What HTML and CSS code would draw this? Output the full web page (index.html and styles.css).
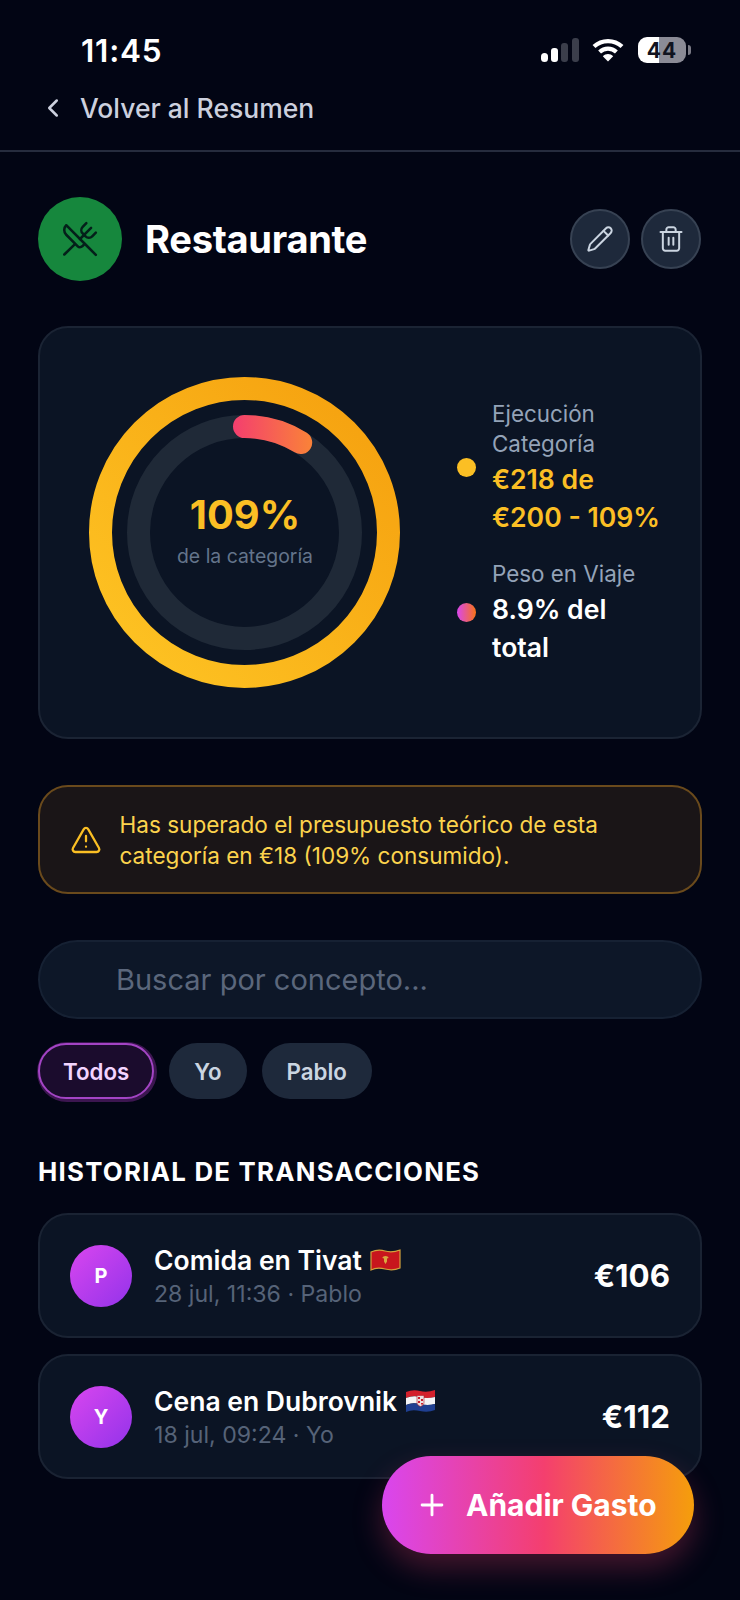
FILE: index.html
```html
<!DOCTYPE html>
<html lang="es">
<head>
<meta charset="utf-8">
<title>Restaurante</title>
<link rel="stylesheet" href="styles.css">
</head>
<body>
<div class="app">
  <header class="status">
    <span class="time">11:45</span>
    <div class="status-icons">
      <svg class="signal" width="38" height="24" viewBox="0 0 38 24"><rect x="0" y="15" width="7" height="9" rx="3.5" fill="#fff"/><rect x="10" y="10" width="7" height="14" rx="3" fill="#fff"/><rect x="20" y="5" width="7" height="19" rx="3" fill="#3b3e4b"/><rect x="31" y="0" width="7" height="24" rx="3" fill="#3b3e4b"/></svg>
      <svg class="wifi" width="32" height="24" viewBox="0 0 32 24"><path d="M2 8.6C9.8 1.2 22.2 1.2 30 8.6" fill="none" stroke="#fff" stroke-width="4.2"/><path d="M7.6 14C12.4 9.6 19.6 9.6 24.4 14" fill="none" stroke="#fff" stroke-width="4.2"/><path d="M10.8 18.2C13.8 15.4 18.2 15.4 21.2 18.2L16 23.6Z" fill="#fff"/></svg>
      <div class="battery"><span class="battery-level">44</span><span class="battery-nub"></span></div>
    </div>
  </header>
  <nav class="nav">
    <svg class="icon chevron" width="30" height="30" viewBox="0 0 24 24"><path d="m15 18-6-6 6-6"/></svg>
    <span>Volver al Resumen</span>
  </nav>
  <main class="main">
    <section class="title-row">
      <div class="cat-icon">
        <svg class="icon utensils" width="38" height="38" viewBox="0 0 24 24"><path d="m16 2-2.3 2.3a3 3 0 0 0 0 4.2l1.8 1.8a3 3 0 0 0 4.2 0L22 8"/><path d="M15 15 3.3 3.3a4.2 4.2 0 0 0 0 6l7.3 7.3c.7.7 2 .7 2.8 0L15 15Zm0 0 7 7"/><path d="m2.1 21.8 6.4-6.3"/><path d="m19 5-7 7"/></svg>
      </div>
      <h1 class="title">Restaurante</h1>
      <button class="round-btn"><svg class="icon action" width="28" height="28" viewBox="0 0 24 24"><path d="M21.174 6.812a1 1 0 0 0-3.986-3.987L3.842 16.174a2 2 0 0 0-.5.83l-1.321 4.352a.5.5 0 0 0 .623.622l4.353-1.32a2 2 0 0 0 .83-.497z"/><path d="m15 5 4 4"/></svg></button>
      <button class="round-btn"><svg class="icon action" width="28" height="28" viewBox="0 0 24 24"><path d="M3 6h18"/><path d="M19 6v14c0 1-1 2-2 2H7c-1 0-2-1-2-2V6"/><path d="M8 6V4c0-1 1-2 2-2h4c1 0 2 1 2 2v2"/><path d="M10 11v6"/><path d="M14 11v6"/></svg></button>
    </section>

    <section class="summary">
      <div class="ring">
        <svg width="311" height="311" viewBox="0 0 311 311">
          <defs>
            <linearGradient id="outerGrad" x1="0" y1="1" x2="1" y2="0"><stop offset="0" stop-color="#fec524"/><stop offset="1" stop-color="#f59f0e"/></linearGradient>
            <linearGradient id="arcGrad" gradientUnits="userSpaceOnUse" x1="145" y1="50" x2="220" y2="50"><stop offset="0" stop-color="#f43f6e"/><stop offset="1" stop-color="#f9803a"/></linearGradient>
          </defs>
          <circle class="ring-outer" cx="155.5" cy="155.5" r="144"/>
          <circle class="ring-track" cx="155.5" cy="155.5" r="106"/>
          <path class="ring-arc" d="M155.5 49.5A106 106 0 0 1 211.7 65.6"/>
        </svg>
        <div class="ring-center">
          <span class="ring-value">109%</span>
          <span class="ring-caption">de la categoría</span>
        </div>
      </div>
      <div class="legend">
        <div class="legend-item">
          <span class="dot dot-amber"></span>
          <div class="legend-text">
            <span class="legend-label">Ejecución Categoría</span>
            <span class="legend-value amber">€218 de €200 - 109%</span>
          </div>
        </div>
        <div class="legend-item">
          <span class="dot dot-pink"></span>
          <div class="legend-text">
            <span class="legend-label">Peso en Viaje</span>
            <span class="legend-value">8.9% del total</span>
          </div>
        </div>
      </div>
    </section>

    <section class="alert">
      <svg class="icon warn" width="32" height="32" viewBox="0 0 24 24"><path d="m21.73 18-8-14a2 2 0 0 0-3.48 0l-8 14A2 2 0 0 0 4 21h16a2 2 0 0 0 1.73-3"/><path d="M12 9v4"/><path d="M12 17h.01"/></svg>
      <p class="alert-text">Has superado el presupuesto teórico de esta categoría en €18 (109% consumido).</p>
    </section>

    <div class="search">Buscar por concepto...</div>

    <div class="chips">
      <span class="chip chip-active">Todos</span>
      <span class="chip">Yo</span>
      <span class="chip">Pablo</span>
    </div>

    <h2 class="heading">HISTORIAL DE TRANSACCIONES</h2>

    <div class="list">
      <article class="tx">
        <span class="avatar">P</span>
        <div class="tx-body">
          <div class="tx-title">Comida en Tivat
            <svg class="flag" width="31" height="24" viewBox="0 0 31 24"><path d="M1 4Q8 1 15 3T30 2V20Q23 23 15 21T1 22Z" fill="#c8161d" stroke="#d3a23c" stroke-width="1.2"/><path d="M15.5 8c-1.600 0-2.800.8-3.200 2l1.700.5v3l1.500 2.500 1.500-2.500v-3l1.700-.5c-.4-1.200-1.600-2-3.200-2Z" fill="#d9a93f"/></svg>
          </div>
          <div class="tx-sub">28 jul, 11:36 · Pablo</div>
        </div>
        <span class="tx-amount">€106</span>
      </article>
      <article class="tx">
        <span class="avatar">Y</span>
        <div class="tx-body">
          <div class="tx-title">Cena en Dubrovnik
            <svg class="flag" width="31" height="24" viewBox="0 0 31 24"><path d="M1 3Q8 0 15 2T30 1V8Q23 10 15 8T1 9Z" fill="#d3202c"/><path d="M1 9Q8 6 15 8T30 8V15Q23 17 15 15T1 16Z" fill="#f4f4f6"/><path d="M1 16Q8 13 15 15T30 15V21Q23 24 15 22T1 23Z" fill="#1f3f91"/><path d="M12 6.500h7v7c0 2-1.500 3.200-3.500 4-2-.8-3.500-2-3.500-4Z" fill="#eadfe0" stroke="#b11c2a" stroke-width=".6"/><path d="M13 8h2v2h-2Zm3 2h2v2h-2Zm-3 2h2v2h-2Zm3 2h2v1.500h-2Z" fill="#c9202e"/></svg>
          </div>
          <div class="tx-sub">18 jul, 09:24 · Yo</div>
        </div>
        <span class="tx-amount">€112</span>
      </article>
    </div>
  </main>

  <button class="fab">
    <svg class="icon plus" width="34" height="34" viewBox="0 0 24 24"><path d="M5 12h14"/><path d="M12 5v14"/></svg>
    <span>Añadir Gasto</span>
  </button>
</div>
</body>
</html>
```

FILE: styles.css
```css
* { box-sizing: border-box; }
html, body { margin: 0; padding: 0; background: #020514; }
body { font-family: Inter, "Noto Sans", "Liberation Sans", sans-serif; color: #fff; }
.app { position: relative; width: 740px; height: 1600px; overflow: hidden; background: #020514; }

.icon { fill: none; stroke: currentColor; stroke-width: 2; stroke-linecap: round; stroke-linejoin: round; flex: none; }

.status { height: 74px; padding: 26px 54px 0 81px; display: flex; align-items: center; justify-content: space-between; }
.time { font-size: 31.5px; font-weight: 600; letter-spacing: .8px; color: #fff; }
.status-icons { display: flex; align-items: center; }
.signal { margin-right: 13px; }
.wifi { margin-right: 14px; }
.battery { position: relative; width: 48px; height: 26px; border-radius: 9px; background: linear-gradient(90deg, #fff 44%, #8b8b96 44%); display: flex; align-items: center; justify-content: center; }
.battery-level { font-size: 21px; font-weight: 700; color: #101320; letter-spacing: 1px; }
.battery-nub { position: absolute; left: 50px; top: 8px; width: 3px; height: 10px; border-radius: 0 3px 3px 0; background: #7b7b86; }

.nav { height: 78px; padding: 0 0 9px 38px; display: flex; align-items: center; gap: 12px; color: #ccd0de; font-size: 26.5px; font-weight: 500; border-bottom: 2px solid #262c3e; }
.chevron { stroke-width: 2; }

.main { padding: 45px 38px 0; }

.title-row { display: flex; align-items: center; gap: 11px; padding-right: 1px; }
.cat-icon { width: 84px; height: 84px; border-radius: 50%; background: #16873d; display: flex; align-items: center; justify-content: center; color: #04201a; margin-right: 12px; flex: none; }
.utensils { stroke-width: 1.6; }
.title { flex: 1; margin: 0; font-size: 38.1px; font-weight: 700; letter-spacing: -.3px; color: #fff; }
.round-btn { width: 60px; height: 60px; padding: 0; border-radius: 50%; border: 2px solid #374253; background: #1e293b; color: #cbd5e1; display: flex; align-items: center; justify-content: center; flex: none; }
.action { stroke-width: 1.7; }

.summary { margin-top: 45px; height: 413px; padding-left: 49px; border: 2px solid #1b2434; border-radius: 30px; background: #0b1424; display: flex; align-items: center; }
.ring { display: grid; place-items: center; width: 311px; height: 311px; flex: none; }
.ring > * { grid-area: 1 / 1; }
.ring-outer { fill: none; stroke: url(#outerGrad); stroke-width: 23; }
.ring-track { fill: none; stroke: #1f2937; stroke-width: 23; }
.ring-arc { fill: none; stroke: url(#arcGrad); stroke-width: 23; stroke-linecap: round; }
.ring-center { display: flex; flex-direction: column; align-items: center; padding: 0 0 4px 1px; }
.ring-value { font-size: 39.8px; font-weight: 700; line-height: 44px; color: #fbbf24; }
.ring-caption { margin-top: 6px; font-size: 19.4px; line-height: 26px; color: #64748b; }

.legend { margin-left: 57px; display: flex; flex-direction: column; gap: 22px; }
.legend-item { display: flex; align-items: center; gap: 16px; }
.dot { width: 19px; height: 19px; border-radius: 50%; flex: none; }
.dot-amber { background: #fbbf24; }
.dot-pink { background: linear-gradient(90deg, #d946ef, #f97316); }
.legend-text { width: 172px; }
.legend-label { display: block; font-size: 22.4px; line-height: 30px; color: #94a3b8; }
.legend-value { display: block; margin-top: 1px; font-size: 26.6px; line-height: 38.5px; font-weight: 600; color: #fff; }
.amber { color: #fbbf24; }

.alert { margin-top: 46px; height: 109px; padding-left: 30px; border: 2px solid #6a4a1c; border-radius: 30px; background: #1a1517; display: flex; align-items: center; gap: 17.5px; }
.warn { color: #fbbf24; stroke-width: 1.7; }
.alert-text { margin: 0; width: 520px; font-size: 22.55px; line-height: 31px; color: #fcd34d; }

.search { margin-top: 46px; height: 79px; padding-left: 76px; border: 2px solid #162133; border-radius: 40px; background: #0d1728; display: flex; align-items: center; font-size: 29px; color: #5b677c; }

.chips { margin-top: 24px; display: flex; gap: 15px; }
.chip { height: 56px; padding: 0 25px; border-radius: 28px; background: #1e293b; color: #cbd5e1; font-size: 22.3px; font-weight: 600; display: flex; align-items: center; }
.chip-active { background: #1b0c2d; color: #f3d4ff; border: 2px solid #a344c4; box-shadow: 1px 1px 0 2px #3c1650; padding: 0 23px; }

.heading { margin: 58px 0 0; font-size: 25.8px; line-height: 30px; font-weight: 700; letter-spacing: 1.26px; color: #fff; }

.list { margin-top: 26px; display: flex; flex-direction: column; gap: 16px; }
.tx { height: 125px; padding: 0 30px; border: 2px solid #1a2333; border-radius: 30px; background: #0b1424; display: flex; align-items: center; gap: 22px; }
.avatar { width: 62px; height: 62px; border-radius: 50%; background: linear-gradient(135deg, #d946ef, #9333ea); display: flex; align-items: center; justify-content: center; font-size: 20px; font-weight: 700; color: #fff; flex: none; }
.tx-body { flex: 1; }
.tx-title { display: flex; align-items: center; gap: 8px; font-size: 26.5px; line-height: 34px; font-weight: 600; color: #fff; }
.flag { flex: none; }
.tx-sub { margin-top: 2px; font-size: 23.1px; line-height: 30px; color: #566378; }
.tx-amount { font-size: 31.3px; font-weight: 700; color: #fff; }

.fab { position: absolute; left: 382px; top: 1456px; width: 312px; height: 98px; padding: 0 0 0 33px; border: 0; border-radius: 49px; background: linear-gradient(90deg, #d946ef 0%, #f43f6e 52%, #f59e0b 100%); box-shadow: 0 14px 30px rgba(244, 63, 110, .28); color: #fff; display: flex; align-items: center; gap: 17px; font-family: inherit; font-size: 30px; font-weight: 700; }
.plus { stroke-width: 2; }
```
